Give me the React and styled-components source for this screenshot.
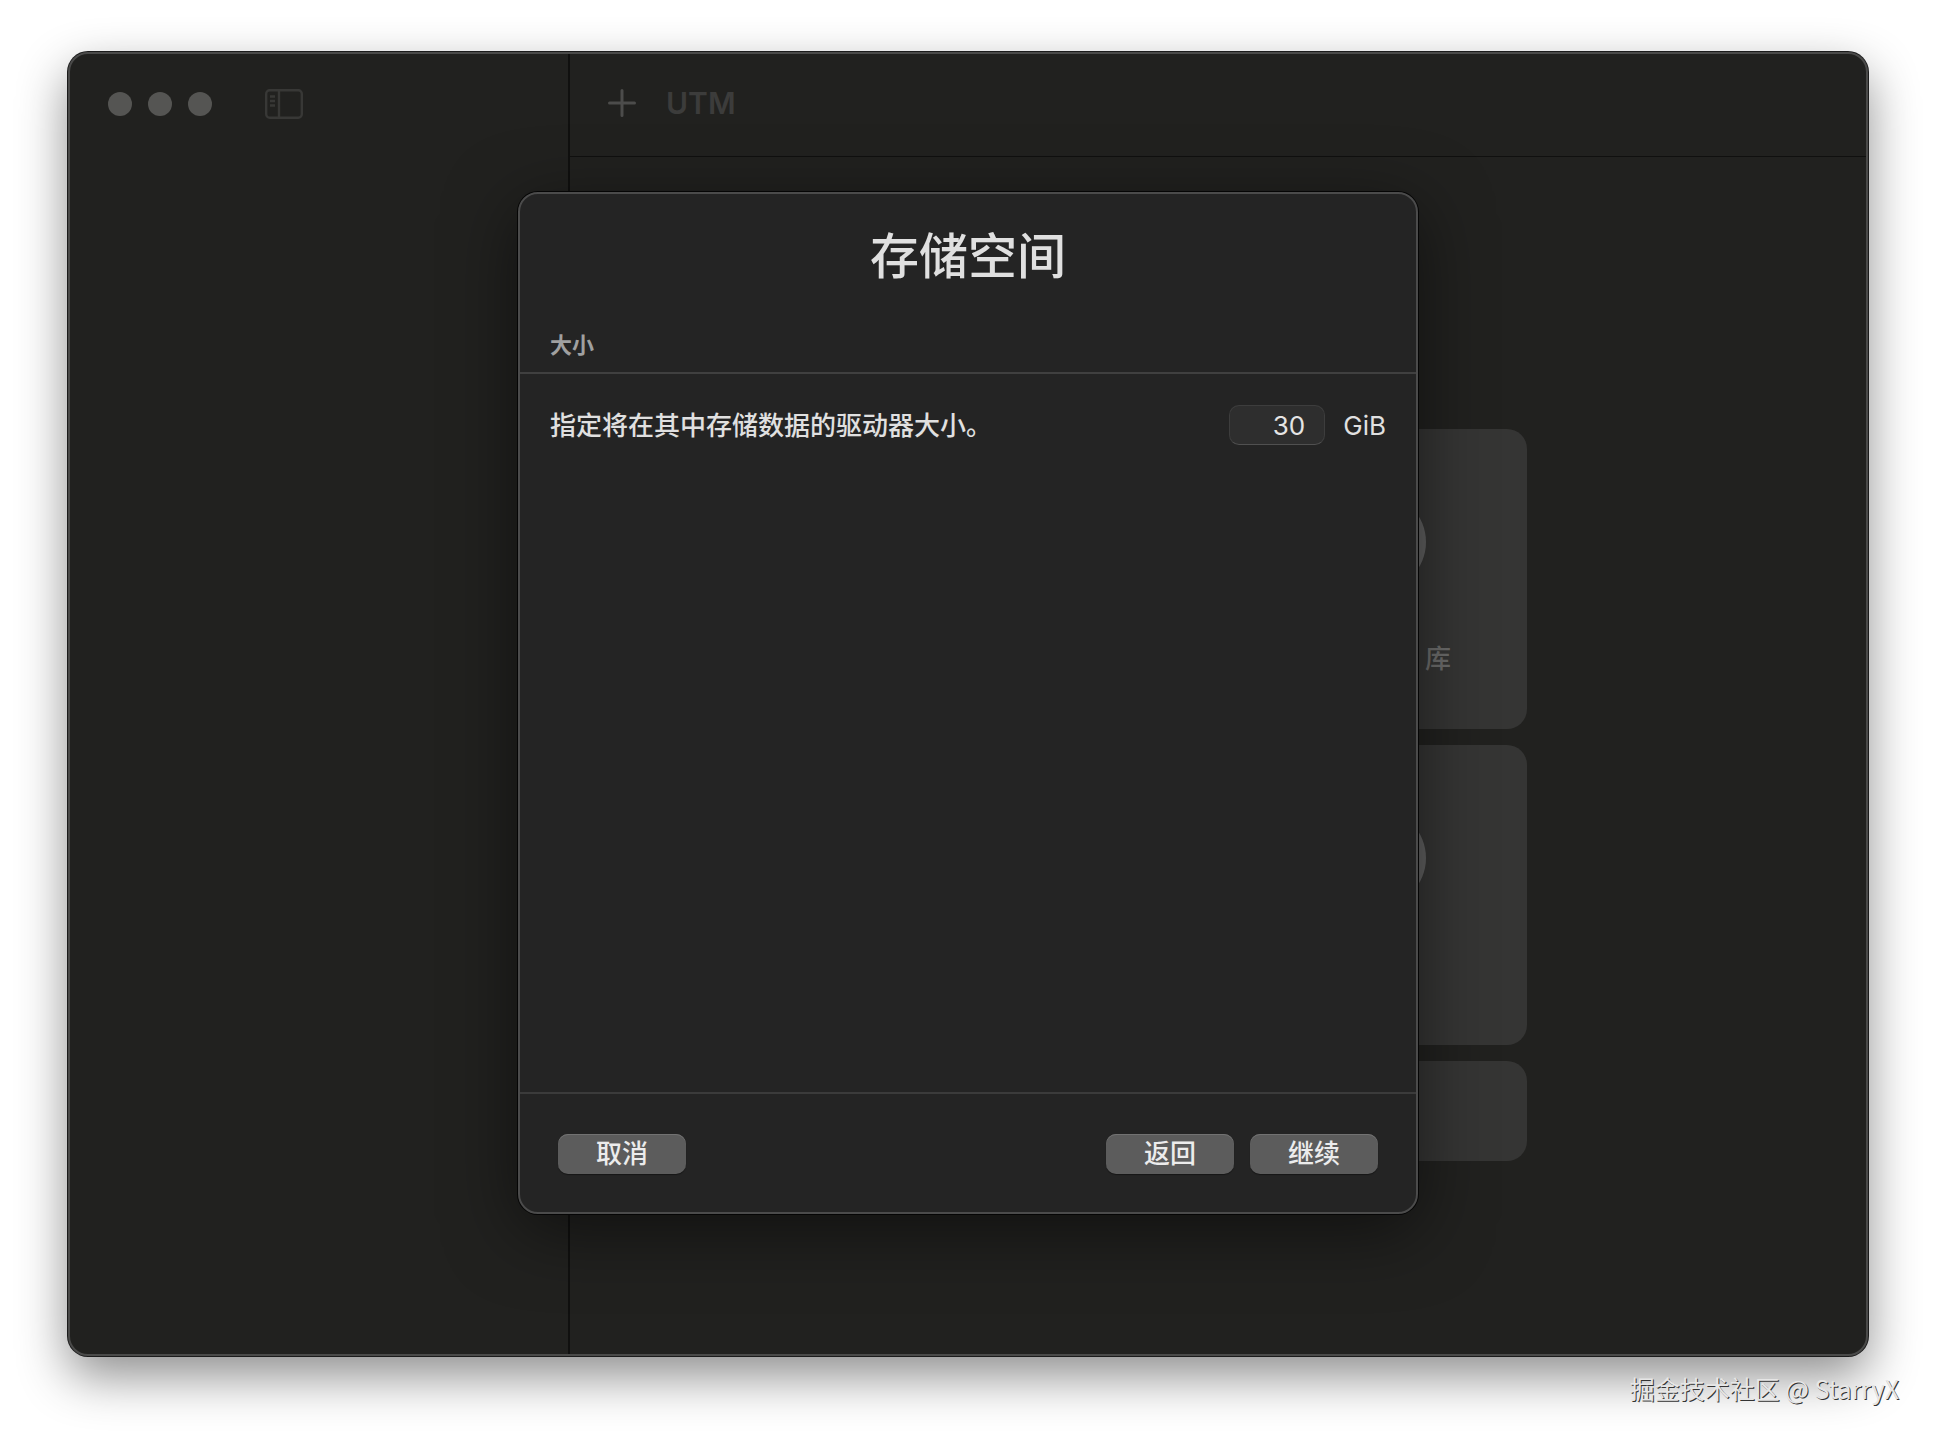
import React from "react";
import styled, { createGlobalStyle } from "styled-components";

const sans = `Inter, "Noto Sans CJK SC", sans-serif`;

const GlobalStyle = createGlobalStyle`
  *, *::before, *::after { box-sizing: border-box; }
  body { margin: 0; background: #fff; font-family: ${sans}; }
  button, input { font: inherit; margin: 0; }
`;

const Page = styled.div`
  position: relative;
  min-height: 100vh;
  display: flex;
  padding: 52px 68px 84px;
`;

const Window = styled.div`
  position: relative;
  flex: 1;
  display: grid;
  grid-template-columns: 500px 1fr;
  border: 2px solid #4a4a49;
  border-radius: 20px;
  background: #21211f;
  box-shadow: 0 0 0 1px #1b1b1b, 0 20px 50px rgba(0, 0, 0, 0.45);
  overflow: hidden;
`;

const Sidebar = styled.aside`
  border-right: 2px solid #10100f;
`;

const SidebarBar = styled.div`
  display: flex;
  align-items: center;
  gap: 53px;
  height: 100px;
  padding-left: 38px;
`;

const Lights = styled.div`
  display: flex;
  gap: 16px;
`;

const Light = styled.button`
  width: 24px;
  height: 24px;
  padding: 0;
  border: 0;
  border-radius: 50%;
  background: #555553;
`;

const IconButton = styled.button`
  display: flex;
  padding: 0;
  border: 0;
  background: none;
  color: ${(p) => p.$color};
`;

const Main = styled.main`
  display: flex;
  flex-direction: column;
`;

const Toolbar = styled.header`
  display: flex;
  align-items: center;
  gap: 30px;
  height: 103px;
  padding: 0 38px 4px;
  border-bottom: 1px solid #10100f;
`;

const AppName = styled.h1`
  margin: 0;
  font-size: 30px;
  line-height: 36px;
  font-weight: 600;
  color: #3c3c3b;
`;

const CardGrid = styled.div`
  display: grid;
  grid-template-columns: 300px 300px;
  justify-content: center;
  gap: 16px;
  padding: 272px 0 0 2px;
`;

const Card = styled.button`
  display: flex;
  flex-direction: column;
  align-items: center;
  gap: 46px;
  min-height: ${(p) => (p.$wide ? 100 : 300)}px;
  grid-column: ${(p) => (p.$wide ? "span 2" : "auto")};
  padding: 64px 76px 0;
  border: 0;
  border-radius: 20px;
  background: #353534;
  color: #6c6c6b;
`;

const CardIcon = styled.span`
  width: 98px;
  height: 98px;
  border-radius: 50%;
  background: #606060;
`;

const CardLabel = styled.span`
  align-self: flex-end;
  font-size: 26px;
  line-height: 44px;
  font-weight: 500;
`;

const SheetLayer = styled.div`
  position: absolute;
  inset: 0;
  display: flex;
  justify-content: center;
  align-items: flex-start;
  padding-top: 138px;
`;

const Sheet = styled.section`
  width: 900px;
  border: 2px solid #4b4b4b;
  border-radius: 20px;
  background: #242424;
  color: #e0e0e0;
  box-shadow: 0 0 0 1px #050505, 0 16px 70px rgba(0, 0, 0, 0.5);
`;

const SheetTitle = styled.h2`
  margin: 0;
  padding: 26px 0 30px;
  font-size: 49px;
  line-height: 74px;
  font-weight: 500;
  text-align: center;
`;

const SectionTitle = styled.h3`
  margin: 0;
  padding: 0 30px 6px;
  border-bottom: 2px solid #404040;
  font-size: 22px;
  line-height: 42px;
  font-weight: 600;
  color: #a0a0a0;
`;

const SheetBody = styled.div`
  min-height: 718px;
  padding: 30px;
  font-size: 26px;
  line-height: 40px;
`;

const Field = styled.div`
  display: flex;
  align-items: center;
  font-weight: 500;
`;

const FieldLabel = styled.label`
  flex: 1;
  padding-top: 2px;
`;

const SizeInput = styled.input`
  width: 96px;
  height: 40px;
  margin-right: 18px;
  padding: 1px 19px 0;
  border: 1px solid #3d3d3d;
  border-bottom-color: #505050;
  border-radius: 10px;
  background: #2e2e2e;
  color: #e4e4e4;
  font-weight: 400;
  text-align: right;
`;

const Unit = styled.span`
  padding-top: 2px;
  font-weight: 400;
`;

const SheetFooter = styled.footer`
  display: flex;
  gap: 16px;
  padding: 40px 38px 38px;
  border-top: 2px solid #3b3b3b;
`;

const Spacer = styled.div`
  flex: 1;
`;

const PushButton = styled.button`
  width: 128px;
  height: 40px;
  padding: 0;
  border: 0;
  border-radius: 10px;
  background: #5c5c5c;
  box-shadow: inset 0 1px 0 #727272, 0 1px 1px rgba(0, 0, 0, 0.4);
  color: #ececec;
  font-size: 26px;
  font-weight: 500;
  line-height: 38px;
`;

const Watermark = styled.p`
  position: absolute;
  right: 37px;
  bottom: 33px;
  margin: 0;
  font-family: "Noto Sans CJK SC", sans-serif;
  font-size: 25px;
  line-height: 38px;
  font-weight: 400;
  color: #e6e6e6;
  text-shadow: 1px 1px 0 #333;
`;

function SidebarIcon() {
  return (
    <svg width="38" height="30" viewBox="0 0 38 30" fill="none" stroke="currentColor" strokeWidth="2.4">
      <rect x="1.200" y="1.200" width="35.600" height="27.600" rx="3.500" />
      <path d="M14 1V29M5 7.500H10M5 12H10M5 16.500H10" />
    </svg>
  );
}

function PlusIcon() {
  return (
    <svg width="28" height="28" viewBox="0 0 28 28" fill="none" stroke="currentColor" strokeWidth="3" strokeLinecap="round">
      <path d="M14 1.500V26.500M1.500 14H26.500" />
    </svg>
  );
}

export default function App() {
  return (
    <>
      <GlobalStyle />
      <Page>
        <Window>
          <Sidebar>
            <SidebarBar>
              <Lights>
                <Light aria-label="关闭" />
                <Light aria-label="最小化" />
                <Light aria-label="缩放" />
              </Lights>
              <IconButton $color="#383836" aria-label="边栏">
                <SidebarIcon />
              </IconButton>
            </SidebarBar>
          </Sidebar>
          <Main>
            <Toolbar>
              <IconButton $color="#4c4c4b" aria-label="新建">
                <PlusIcon />
              </IconButton>
              <AppName>UTM</AppName>
            </Toolbar>
            <CardGrid>
              <Card aria-label="创建">
                <CardIcon />
              </Card>
              <Card>
                <CardIcon />
                <CardLabel>库</CardLabel>
              </Card>
              <Card aria-label="指南">
                <CardIcon />
              </Card>
              <Card aria-label="支持">
                <CardIcon />
              </Card>
              <Card $wide aria-label="服务器" />
            </CardGrid>
          </Main>
          <SheetLayer>
            <Sheet role="dialog" aria-labelledby="sheet-title">
              <SheetTitle id="sheet-title">存储空间</SheetTitle>
              <SectionTitle>大小</SectionTitle>
              <SheetBody>
                <Field>
                  <FieldLabel htmlFor="size">指定将在其中存储数据的驱动器大小。</FieldLabel>
                  <SizeInput id="size" type="text" inputMode="numeric" defaultValue="30" />
                  <Unit>GiB</Unit>
                </Field>
              </SheetBody>
              <SheetFooter>
                <PushButton>取消</PushButton>
                <Spacer />
                <PushButton>返回</PushButton>
                <PushButton>继续</PushButton>
              </SheetFooter>
            </Sheet>
          </SheetLayer>
        </Window>
        <Watermark>掘金技术社区 @ StarryX</Watermark>
      </Page>
    </>
  );
}
